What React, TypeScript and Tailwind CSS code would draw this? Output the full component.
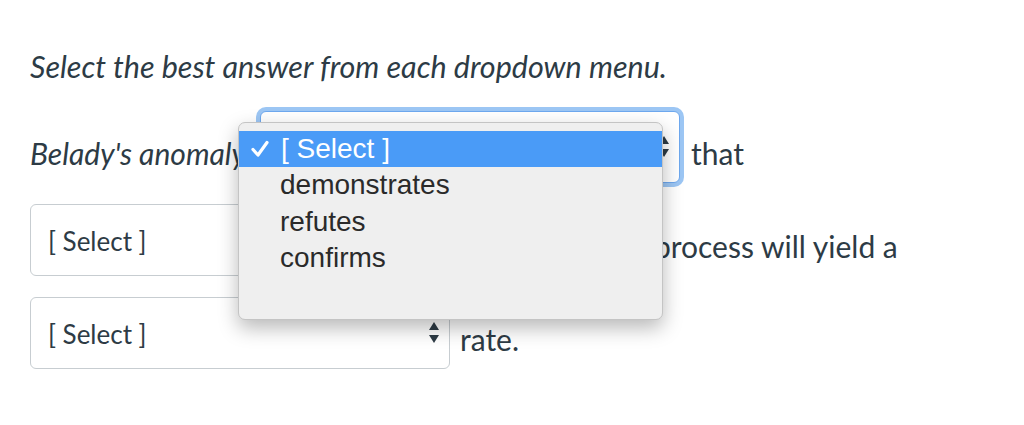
import React from "react";

const Arrows = () => (
  <svg width="10" height="22" viewBox="0 0 10 22" className="shrink-0">
    <path d="M5 0 L10 8 L0 8 Z" fill="#2d3b45" />
    <path d="M0 13 L10 13 L5 21 Z" fill="#2d3b45" />
  </svg>
);

const SelectBox = ({ focused = false }: { focused?: boolean }) => (
  <div
    className={
      "relative flex items-center justify-between w-[420px] h-[72px] shrink-0 rounded-[6px] bg-white pl-[17px] pr-[10px] " +
      (focused
        ? "border border-[#6ea8ee] shadow-[0_0_0_4px_#9cc6f4]"
        : "border border-[#c7cdd1]")
    }
  >
    <span className="text-[26px] leading-[26px] pt-[2px] text-[#2d3b45] font-['Lato',sans-serif]">
      [ Select ]
    </span>
    <Arrows />
  </div>
);

export default function App() {
  return (
    <div className="relative w-[1024px] h-[425px] bg-white overflow-hidden font-['Lato',sans-serif] text-[#2d3b45]">
      <div className="pt-[51px] pl-[30px] flex flex-col">
        <p className="italic text-[30.5px] leading-[30px] whitespace-nowrap">
          Select the best answer from each dropdown menu.
        </p>
        <div className="mt-[30px] flex items-center">
          <span className="italic text-[30px] leading-[30px] pt-[11px] whitespace-nowrap">
            Belady's anomaly
          </span>
          <div className="ml-[14px]">
            <SelectBox focused />
          </div>
          <span className="ml-[11px] text-[30px] leading-[30px] pt-[11px]">that</span>
        </div>
        <div className="mt-[21px] flex items-center">
          <SelectBox />
          <span className="ml-[39px] text-[30px] leading-[30px] pt-[11px] whitespace-nowrap">
            frames for a process will yield a
          </span>
        </div>
        <div className="mt-[21px] flex items-center">
          <SelectBox />
          <span className="ml-[10px] text-[30px] leading-[30px] pt-[11px]">rate.</span>
        </div>
      </div>

      <div className="absolute left-[238px] top-[122px] w-[425px] h-[198px] rounded-[7px] bg-[#efefef] border border-[#c4c4c4] shadow-[0_8px_20px_rgba(0,0,0,0.28)] pt-[8px] font-['Liberation_Sans',Arial,sans-serif] text-[28px] text-[#2a2a2a]">
        <div className="h-[36px] bg-[#4a9bf7] text-white flex items-center">
          <svg width="18" height="18" viewBox="0 0 18 18" className="ml-[12px] mr-[12px]">
            <path d="M2 9.5 L7 15 L16 2.5" stroke="white" strokeWidth="3.2" fill="none" strokeLinecap="round" strokeLinejoin="round" />
          </svg>
          <span className="leading-[36px]">[ Select ]</span>
        </div>
        <div className="h-[36.5px] leading-[36.5px] pl-[41px]">demonstrates</div>
        <div className="h-[36.5px] leading-[36.5px] pl-[41px]">refutes</div>
        <div className="h-[36.5px] leading-[36.5px] pl-[41px]">confirms</div>
      </div>
    </div>
  );
}
